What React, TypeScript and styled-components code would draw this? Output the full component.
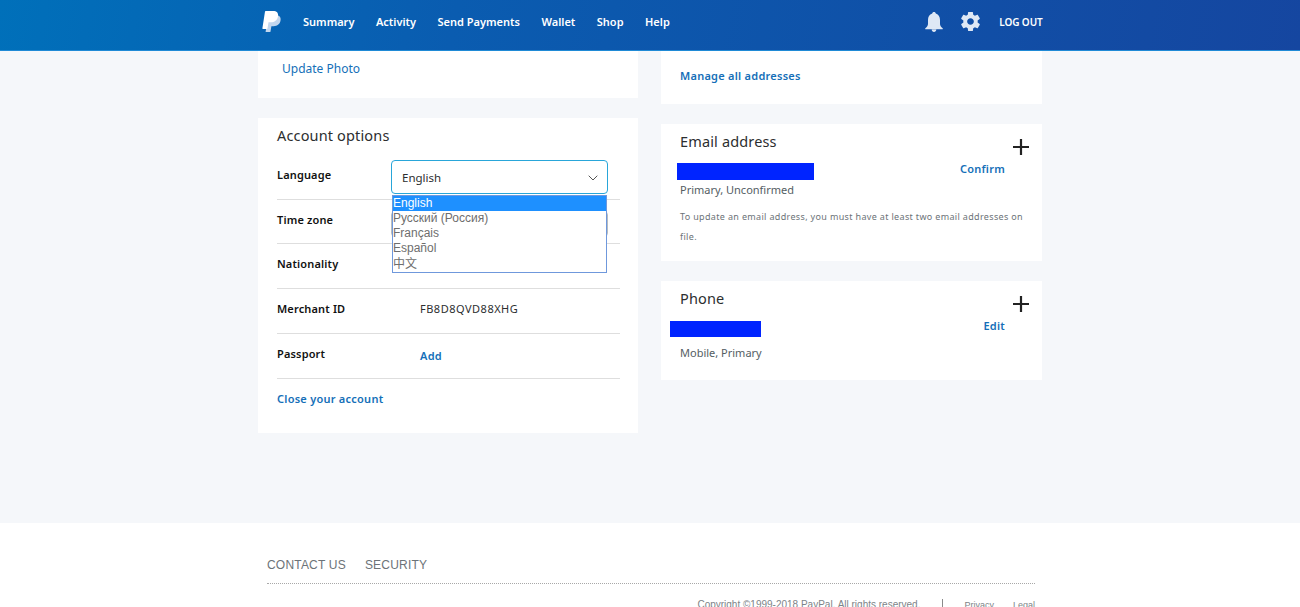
import React from "react";
import styled, { createGlobalStyle } from "styled-components";

const Global = createGlobalStyle`
  html, body { margin: 0; padding: 0; height: 607px; overflow: hidden; background: #f5f7fa; }
  body { font-family: "Noto Sans", "Open Sans", sans-serif; }
  #root { height: 607px; overflow: hidden; }
  * { box-sizing: border-box; }
`;

const Page = styled.div`
  width: 1300px;
  height: 607px;
  display: flex;
  flex-direction: column;
  overflow: hidden;
`;

const Header = styled.header`
  flex: 0 0 51px;
  height: 51px;
  background: linear-gradient(100deg, #0070ba 0%, #0a5cb0 35%, #1546a0 100%);
  border-bottom: 1px solid #1f8ad6;
  padding: 0 0 7px 262px;
  display: flex;
  align-items: center;
  color: #fff;
`;

const Logo = styled.svg`
  width: 19px;
  height: 23px;
  margin-right: 22px;
`;

const NavLink = styled.a`
  font-size: 11px;
  font-weight: 600;
  color: #fff;
  margin-right: 21.5px;
  white-space: nowrap;
`;

const HeaderRight = styled.div`
  margin-left: 234px;
  display: flex;
  align-items: center;
`;

const LogOut = styled.a`
  font-size: 10px;
  font-weight: 600;
  color: #fff;
  margin-left: 17px;
  letter-spacing: -0.1px;
  white-space: nowrap;
`;

const HeaderIcon = styled.svg`
  display: block;
  fill: #dfe8f5;
`;

const GearIcon = styled(HeaderIcon)`
  margin-left: 16px;
`;

const Main = styled.main`
  flex: 0 0 472px;
  height: 472px;
  padding-left: 258px;
  display: flex;
  align-items: flex-start;
  gap: 23px;
`;

const Column = styled.div<{ $w: number }>`
  width: ${(p) => p.$w}px;
  display: flex;
  flex-direction: column;
  gap: 20px;
`;

const Card = styled.section<{ $h: number }>`
  background: #fff;
  height: ${(p) => p.$h}px;
`;

const PhotoCard = styled(Card)`
  padding: 9px 0 0 24px;
`;

const LinkText = styled.a<{ $bold?: boolean; $size?: number; $lift?: number }>`
  display: block;
  color: #156fb8;
  font-size: ${(p) => p.$size ?? 11}px;
  font-weight: ${(p) => (p.$bold ? 600 : 400)};
  line-height: 18px;
  letter-spacing: ${(p) => (p.$bold ? 0.25 : 0)}px;
  white-space: nowrap;
  margin-top: ${(p) => -(p.$lift ?? 0)}px;
`;

const OptionsCard = styled(Card)`
  padding: 7px 18px 0 19px;
`;

const Heading = styled.h2`
  margin: 0;
  font-size: 14.5px;
  font-weight: 400;
  color: #2c2e2f;
  line-height: 20px;
  letter-spacing: 0.15px;
`;

const Row = styled.div<{ $h: number }>`
  position: relative;
  height: ${(p) => p.$h}px;
  display: flex;
  align-items: center;
  border-bottom: 1px solid #dedede;
  padding-bottom: 5px;
`;

const RowLabel = styled.span`
  width: 143px;
  font-size: 11px;
  font-weight: 600;
  color: #111;
  letter-spacing: 0.15px;
  flex: none;
`;

const MerchantId = styled.span`
  font-size: 11px;
  color: #2c2e2f;
  letter-spacing: 0.5px;
`;

const AddSlot = styled.div`
  margin-top: 4px;
`;

const SelectBox = styled.div`
  position: relative;
  left: -29px;
  flex: none;
  width: 217px;
  height: 34px;
  margin-top: 4px;
  border: 1px solid #29a6d9;
  border-radius: 4px;
  background: #fff;
  padding: 2px 9px 0 10px;
  display: flex;
  align-items: center;
  justify-content: space-between;
  font-size: 11.5px;
  color: #2c2e2f;
`;

const GhostSelect = styled.div`
  position: absolute;
  left: 114px;
  top: 11px;
  width: 217px;
  height: 26px;
  border: 1px solid #b7bcbf;
  border-radius: 4px;
`;

const Dropdown = styled.ul`
  position: absolute;
  left: 115px;
  top: 40px;
  width: 215px;
  height: 78px;
  margin: 0;
  padding: 0;
  list-style: none;
  background: #fff;
  border: 1px solid #6f98dc;
  font-family: "Liberation Sans", "Noto Sans CJK SC", sans-serif;
  font-size: 12px;
  z-index: 2;
`;

const DropItem = styled.li<{ $active?: boolean }>`
  height: 15px;
  line-height: 14px;
  color: ${(p) => (p.$active ? "#fff" : "#6e6e6e")};
  background: ${(p) => (p.$active ? "#1e90ff" : "transparent")};
  &:last-child { padding-top: 1px; }
`;

const CloseRow = styled.div`
  margin-top: 11px;
`;

const Spacer = styled.div`
  height: 10px;
`;

const AddressCard = styled(Card)`
  padding: 16px 0 0 19px;
`;

const ContactCard = styled(Card)`
  position: relative;
  padding: 7px 37px 0 19px;
`;

const PlusIcon = styled.svg`
  position: absolute;
  right: 13px;
  top: 15px;
`;

const ValueRow = styled.div<{ $mt: number; $ml: number }>`
  display: flex;
  align-items: flex-start;
  justify-content: space-between;
  margin-top: ${(p) => p.$mt}px;
  margin-left: ${(p) => p.$ml}px;
`;

const Redacted = styled.div<{ $w: number; $h: number }>`
  width: ${(p) => p.$w}px;
  height: ${(p) => p.$h}px;
  background: #0024ff;
`;

const Meta = styled.div<{ $mt: number }>`
  font-size: 11px;
  color: #545d63;
  line-height: 15px;
  margin-top: ${(p) => p.$mt}px;
`;

const Note = styled.p`
  margin: 10px 0 0;
  width: 350px;
  font-size: 9px;
  line-height: 20px;
  letter-spacing: 0.34px;
  color: #6c7378;
`;

const Footer = styled.footer`
  flex: 1 0 84px;
  background: #fff;
  padding: 34px 265px 0 267px;
  font-family: "Liberation Sans", sans-serif;
  color: #6c7378;
`;

const FooterLinks = styled.div`
  display: flex;
  gap: 19px;
  font-size: 12px;
  line-height: 16px;
  letter-spacing: 0.2px;
  padding-bottom: 10px;
  border-bottom: 1px dotted #a8a8a8;
`;

const Legal = styled.div`
  display: flex;
  justify-content: flex-end;
  align-items: center;
  font-size: 9px;
  line-height: 12px;
  margin-top: 15px;
  color: #7d8488;
`;

const Copyright = styled.span`
  font-size: 10px;
`;

const LegalSep = styled.span`
  width: 1px;
  height: 12px;
  background: #8a8a8a;
  margin: 0 21px 0 22px;
`;

const LegalLink = styled.a`
  & + & { margin-left: 19px; }
`;

const Plus = () => (
  <PlusIcon width="16" height="16" viewBox="0 0 16 16">
    <path d="M8 0v16M0 8h16" stroke="#222" strokeWidth="2.2" />
  </PlusIcon>
);

export default function App() {
  return (
    <Page>
      <Global />
      <Header>
        <Logo viewBox="0 0 19 23">
          <path
            d="M6 5h7.500c3.300 0 5.500 1.600 5.100 5-.5 4-3.200 6.200-7 6.200H9.400l-.9 5.300c-.1.400-.3.500-.6.500H3.600z"
            fill="#c3d7ee"
          />
          <path
            d="M3.700 1h7.300c3.800 0 5.600 1.900 5 5.300-.7 4-3.500 6-7.200 6H6.500l-1 6.200c-.1.300-.3.500-.6.500H.9c-.4 0-.6-.3-.5-.7L3 1.500c.1-.3.300-.5.700-.5z"
            fill="#fff"
          />
        </Logo>
        <NavLink>Summary</NavLink>
        <NavLink>Activity</NavLink>
        <NavLink>Send Payments</NavLink>
        <NavLink>Wallet</NavLink>
        <NavLink>Shop</NavLink>
        <NavLink>Help</NavLink>
        <HeaderRight>
          <HeaderIcon width="18" height="20" viewBox="0 0 18 20">
            <path d="M9 0c1 0 1.700.7 1.800 1.600C13.700 2.400 15 5 15 8v4c0 1.500 1 2.800 2.600 4.200.5.400.2 1-.4 1H.8c-.6 0-.9-.6-.4-1C2 14.800 3 13.500 3 12V8c0-3 1.300-5.600 4.200-6.400C7.300.7 8 0 9 0zM6.700 17.600h4.600c0 1.400-1 2.400-2.300 2.400s-2.300-1-2.300-2.400z" />
          </HeaderIcon>
          <GearIcon width="23" height="23" viewBox="0 0 24 24">
            <path d="M19.430 12.980c.04-.32.07-.64.07-.98s-.03-.66-.07-.98l2.110-1.650c.19-.15.240-.42.120-.64l-2-3.460c-.12-.22-.39-.3-.61-.22l-2.490 1c-.52-.4-1.080-.73-1.690-.98l-.38-2.650C14.460 2.180 14.250 2 14 2h-4c-.25 0-.46.18-.49.42l-.38 2.650c-.61.25-1.170.59-1.690.98l-2.490-1c-.23-.09-.49 0-.61.22l-2 3.460c-.13.220-.07.490.12.640l2.110 1.650c-.04.320-.07.650-.07.980s.03.660.07.980l-2.110 1.650c-.19.150-.24.420-.12.640l2 3.460c.12.220.39.300.61.220l2.490-1c.52.400 1.080.730 1.690.980l.38 2.650c.03.240.24.420.49.420h4c.25 0 .46-.18.490-.42l.38-2.650c.61-.25 1.170-.59 1.690-.98l2.490 1c.23.090.49 0 .61-.22l2-3.460c.12-.22.070-.49-.12-.64l-2.110-1.650zM12 15.500c-1.930 0-3.500-1.570-3.500-3.500s1.570-3.500 3.500-3.500 3.500 1.570 3.500 3.500-1.570 3.500-3.500 3.500z" />
          </GearIcon>
          <LogOut>LOG OUT</LogOut>
        </HeaderRight>
      </Header>
      <Main>
        <Column $w={380}>
          <PhotoCard $h={47}>
            <LinkText $size={12}>Update Photo</LinkText>
          </PhotoCard>
          <OptionsCard $h={315}>
            <Heading>Account options</Heading>
            <Spacer />
            <Row $h={45}>
              <RowLabel>Language</RowLabel>
              <SelectBox>
                English
                <svg width="10" height="6" viewBox="0 0 10 6">
                  <path d="M.7.7L5 5 9.300.7" fill="none" stroke="#555" strokeWidth="1" />
                </svg>
              </SelectBox>
              <Dropdown>
                <DropItem $active>English</DropItem>
                <DropItem>Русский (Россия)</DropItem>
                <DropItem>Français</DropItem>
                <DropItem>Español</DropItem>
                <DropItem>中文</DropItem>
              </Dropdown>
            </Row>
            <Row $h={44}>
              <RowLabel>Time zone</RowLabel>
              <GhostSelect />
            </Row>
            <Row $h={45}>
              <RowLabel>Nationality</RowLabel>
            </Row>
            <Row $h={45}>
              <RowLabel>Merchant ID</RowLabel>
              <MerchantId>FB8D8QVD88XHG</MerchantId>
            </Row>
            <Row $h={45}>
              <RowLabel>Passport</RowLabel>
              <AddSlot>
                <LinkText $bold>Add</LinkText>
              </AddSlot>
            </Row>
            <CloseRow>
              <LinkText $bold>Close your account</LinkText>
            </CloseRow>
          </OptionsCard>
        </Column>
        <Column $w={381}>
          <AddressCard $h={53}>
            <LinkText $bold>Manage all addresses</LinkText>
          </AddressCard>
          <ContactCard $h={137}>
            <Plus />
            <Heading>Email address</Heading>
            <ValueRow $mt={12} $ml={-3}>
              <Redacted $w={137} $h={17} />
              <LinkText $bold $lift={3}>Confirm</LinkText>
            </ValueRow>
            <Meta $mt={2}>Primary, Unconfirmed</Meta>
            <Note>To update an email address, you must have at least two email addresses on file.</Note>
          </ContactCard>
          <ContactCard $h={99}>
            <Plus />
            <Heading>Phone</Heading>
            <ValueRow $mt={13} $ml={-10}>
              <Redacted $w={91} $h={16} />
              <LinkText $bold $lift={4}>Edit</LinkText>
            </ValueRow>
            <Meta $mt={8}>Mobile, Primary</Meta>
          </ContactCard>
        </Column>
      </Main>
      <Footer>
        <FooterLinks>
          <span>CONTACT US</span>
          <span>SECURITY</span>
        </FooterLinks>
        <Legal>
          <Copyright>Copyright ©1999-2018 PayPal. All rights reserved.</Copyright>
          <LegalSep />
          <LegalLink>Privacy</LegalLink>
          <LegalLink>Legal</LegalLink>
        </Legal>
      </Footer>
    </Page>
  );
}
